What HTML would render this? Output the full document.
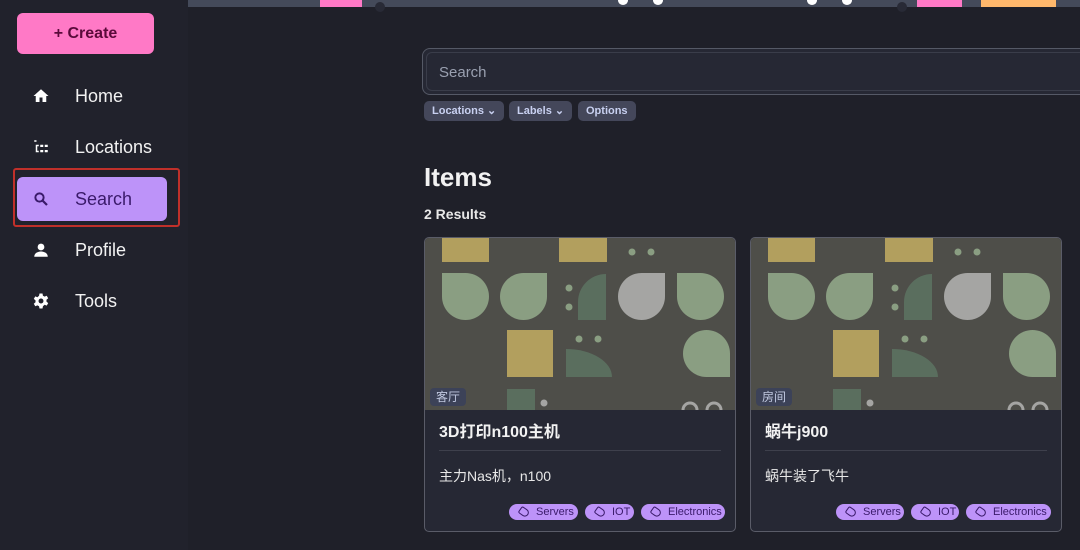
<!DOCTYPE html>
<html><head><meta charset="utf-8"><style>
*{box-sizing:border-box;margin:0;padding:0}
body{width:1080px;height:550px;overflow:hidden;background:#1f2029;font-family:"Liberation Sans","Noto Sans CJK SC",sans-serif;color:#f2f2f2;position:relative}
.side{position:absolute;left:0;top:0;width:188px;height:550px;background:#21222c}
.create{position:absolute;left:17px;top:13px;width:137px;height:41px;background:#ff79c6;border-radius:6px;color:#5a0a3a;font-weight:bold;font-size:16px;text-align:center;line-height:41px}
.nav{position:absolute;left:17px;width:150px;height:44px;font-size:18px;line-height:44px}
.nav .ic{position:absolute;left:15px;top:13px;width:18px;height:18px}
.nav span{position:absolute;left:58px}
.sel{background:#bd93f9;border-radius:6px;color:#3a1a6a}
.red{position:absolute;left:13px;top:168px;width:167px;height:59px;border:2px solid #c0302a;border-radius:3px}
.topbar{position:absolute;left:188px;top:0;width:892px;height:7px;background:#444a5a}
.search{position:absolute;left:422px;top:48px;width:680px;height:47px;border:1px solid #555966;border-radius:8px;background:#262834}
.search div{position:absolute;inset:3px;border:1px solid #3a3d4a;border-radius:6px;font-size:15px;color:#9aa0b0;padding:11px 12px}
.chip{position:absolute;top:101px;height:20px;background:#44475a;border-radius:5px;font-size:11px;font-weight:bold;color:#c8d0f0;line-height:20px;padding:0 8px}
h1{position:absolute;left:424px;top:162px;font-size:26px;font-weight:bold}
.res{position:absolute;left:424px;top:206px;font-size:14px;font-weight:bold;color:#e8e8e8}
.card{position:absolute;top:237px;width:312px;height:295px;border:1px solid #5a5c68;border-radius:5px;background:#262834;overflow:hidden}
.card svg{position:absolute;left:0;top:0}
.loc{position:absolute;left:5px;top:150px;background:#3c4258;color:#c0c8e0;font-size:12px;padding:1px 6px;border-radius:4px;height:18px;line-height:16px}
.t{position:absolute;left:14px;top:180px;font-size:16px;font-weight:bold}
.hr{position:absolute;left:14px;right:14px;top:212px;height:1px;background:#3e404c}
.d{position:absolute;left:14px;top:228px;font-size:14px;color:#e8e8e8}
.tag{position:absolute;top:266px;height:16px;background:#bd93f9;border-radius:8px;color:#3a1a6a;font-size:11px;line-height:17px;padding-left:27px}
.tag:before{content:"";position:absolute;left:10px;top:4px;width:8px;height:6px;border:1.3px solid #3a1a6a;border-radius:2px 4px 4px 2px;transform:rotate(35deg)}
</style></head><body>
<div class="side">
<div class="create">+ Create</div>
<div class="nav" style="top:74px"><svg class="ic" viewBox="0 0 24 24"><path fill="#fff" d="M10 20v-6h4v6h5v-8h3L12 3 2 12h3v8z"/></svg><span>Home</span></div>
<div class="nav" style="top:125px"><svg class="ic" viewBox="0 0 24 24"><path fill="#fff" d="M3 3h3v2H3zM3 7h2v12h4v-2H7V11h2V9H5V7zM11 9h4v3h-4zM11 16h4v3h-4zM17 9h4v3h-4zM17 16h4v3h-4z"/></svg><span>Locations</span></div>
<div class="nav sel" style="top:177px"><svg class="ic" viewBox="0 0 24 24"><circle cx="10" cy="10" r="5.5" fill="none" stroke="#3a1a6a" stroke-width="2.6"/><path d="M14 14l6 6" stroke="#3a1a6a" stroke-width="3"/></svg><span>Search</span></div>
<div class="nav" style="top:228px"><svg class="ic" viewBox="0 0 24 24"><circle cx="12" cy="8" r="4.5" fill="#fff"/><path fill="#fff" d="M3 21c0-5 5-7 9-7s9 2 9 7z"/></svg><span>Profile</span></div>
<div class="nav" style="top:279px"><svg class="ic" viewBox="0 0 24 24"><path fill="#fff" d="M10 2h4l.6 3 2.2 1.2 2.8-1.2 2 3.4-2.3 2v2.4l2.3 2-2 3.4-2.8-1.2L14.6 19 14 22h-4l-.6-3-2.2-1.2-2.8 1.2-2-3.4 2.3-2v-2.4l-2.3-2 2-3.4 2.8 1.2L9.4 5z"/><circle cx="12" cy="12" r="3.3" fill="#21222c"/></svg><span>Tools</span></div>
</div>
<div class="red"></div>
<div class="topbar">
<div style="position:absolute;left:132px;top:0;width:42px;height:7px;background:#ff79c6"></div>
<div style="position:absolute;left:187px;top:2px;width:10px;height:10px;border-radius:50%;background:#282a36"></div>
<div style="position:absolute;left:430px;top:-4px;width:10px;height:9px;border-radius:50%;background:#fff"></div>
<div style="position:absolute;left:465px;top:-4px;width:10px;height:9px;border-radius:50%;background:#fff"></div>
<div style="position:absolute;left:619px;top:-4px;width:10px;height:9px;border-radius:50%;background:#fff"></div>
<div style="position:absolute;left:654px;top:-4px;width:10px;height:9px;border-radius:50%;background:#fff"></div>
<div style="position:absolute;left:709px;top:2px;width:10px;height:10px;border-radius:50%;background:#282a36"></div>
<div style="position:absolute;left:729px;top:0;width:45px;height:7px;background:#ff79c6"></div>
<div style="position:absolute;left:793px;top:0;width:75px;height:7px;background:#ffb86c"></div>
</div>
<div class="search"><div>Search</div></div>
<div class="chip" style="left:424px">Locations ⌄</div>
<div class="chip" style="left:509px">Labels ⌄</div>
<div class="chip" style="left:578px">Options</div>
<h1>Items</h1>
<div class="res">2 Results</div>

<div class="card" style="left:424px">
<svg width="312" height="172" viewBox="0 0 312 172"><rect width="312" height="172" fill="#4e4e49"/>
<g fill="#b29f5e"><rect x="17" y="0" width="47" height="24"/><rect x="134" y="0" width="48" height="24"/><rect x="82" y="92" width="46" height="47"/></g>
<g fill="#8a9e82"><circle cx="207" cy="14" r="3.5"/><circle cx="226" cy="14" r="3.5"/><circle cx="144" cy="50" r="3.5"/><circle cx="144" cy="69" r="3.5"/><circle cx="154" cy="101" r="3.5"/><circle cx="173" cy="101" r="3.5"/>
<path d="M17 35H40.5A23.5 23.5 0 1 1 17 58.5Z"/><path d="M122 35V58.5A23.5 23.5 0 1 1 98.5 35Z"/><path d="M252 35H275.5A23.5 23.5 0 1 1 252 58.5Z"/><path d="M305 139H281.5A23.5 23.5 0 1 1 305 115.5Z"/></g>
<path fill="#a5a5a3" d="M240 35V58.5A23.5 23.5 0 1 1 216.5 35Z"/>
<g fill="#5a6e5e"><path d="M181 36v46h-28v-18a28 28 0 0 1 28-28z"/><path d="M141 139v-28a46 28 0 0 1 46 28z"/><rect x="82" y="151" width="28" height="21"/></g>
<circle cx="119" cy="165" r="3.5" fill="#a5a5a3"/>
<path d="M258 172a7 7 0 0 1 14 0M282 172a7 7 0 0 1 14 0" stroke="#a5a5a3" stroke-width="3" fill="none"/>
</svg>
<div class="loc">客厅</div>
<div class="t">3D打印n100主机</div><div class="hr"></div>
<div class="d">主力Nas机，n100</div>
<div class="tag" style="left:84px;width:69px">Servers</div>
<div class="tag" style="left:160px;width:49px">IOT</div>
<div class="tag" style="left:216px;width:84px">Electronics</div>
</div>

<div class="card" style="left:750px">
<svg width="312" height="172" viewBox="0 0 312 172"><rect width="312" height="172" fill="#4e4e49"/>
<g fill="#b29f5e"><rect x="17" y="0" width="47" height="24"/><rect x="134" y="0" width="48" height="24"/><rect x="82" y="92" width="46" height="47"/></g>
<g fill="#8a9e82"><circle cx="207" cy="14" r="3.5"/><circle cx="226" cy="14" r="3.5"/><circle cx="144" cy="50" r="3.5"/><circle cx="144" cy="69" r="3.5"/><circle cx="154" cy="101" r="3.5"/><circle cx="173" cy="101" r="3.5"/>
<path d="M17 35H40.5A23.5 23.5 0 1 1 17 58.5Z"/><path d="M122 35V58.5A23.5 23.5 0 1 1 98.5 35Z"/><path d="M252 35H275.5A23.5 23.5 0 1 1 252 58.5Z"/><path d="M305 139H281.5A23.5 23.5 0 1 1 305 115.5Z"/></g>
<path fill="#a5a5a3" d="M240 35V58.5A23.5 23.5 0 1 1 216.5 35Z"/>
<g fill="#5a6e5e"><path d="M181 36v46h-28v-18a28 28 0 0 1 28-28z"/><path d="M141 139v-28a46 28 0 0 1 46 28z"/><rect x="82" y="151" width="28" height="21"/></g>
<circle cx="119" cy="165" r="3.5" fill="#a5a5a3"/>
<path d="M258 172a7 7 0 0 1 14 0M282 172a7 7 0 0 1 14 0" stroke="#a5a5a3" stroke-width="3" fill="none"/>
</svg>
<div class="loc">房间</div>
<div class="t">蜗牛j900</div><div class="hr"></div>
<div class="d">蜗牛装了飞牛</div>
<div class="tag" style="left:85px;width:68px">Servers</div>
<div class="tag" style="left:160px;width:48px">IOT</div>
<div class="tag" style="left:215px;width:85px">Electronics</div>
</div>
</body></html>
